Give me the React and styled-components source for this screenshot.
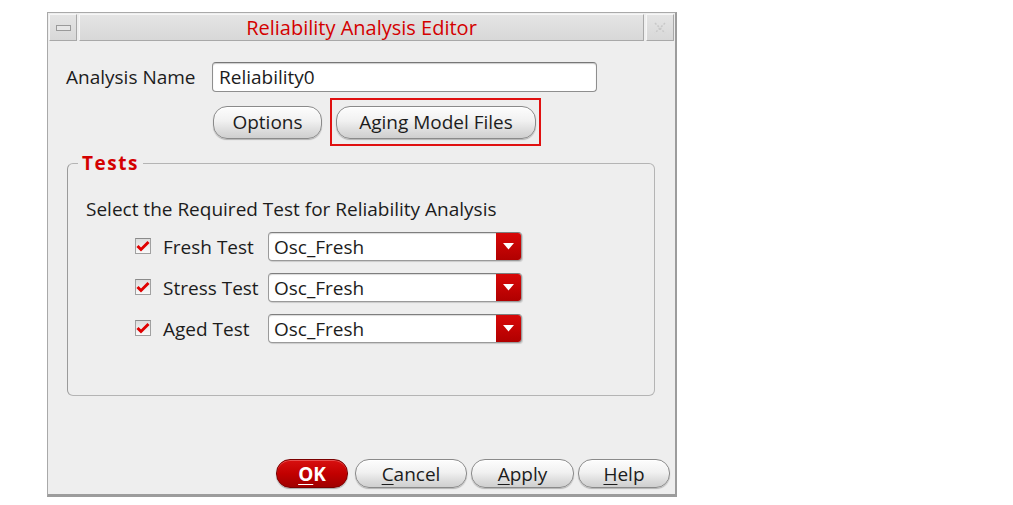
import styled, { createGlobalStyle } from "styled-components";

const GlobalStyle = createGlobalStyle`
  body {
    margin: 0;
    background: #ffffff;
    font-family: "Open Sans", "DejaVu Sans", sans-serif;
    color: #1c1c1c;
  }
`;

const Page = styled.div`
  padding: 12px 0 0 47px;
`;

const Window = styled.div`
  box-sizing: border-box;
  width: 630px;
  height: 485px;
  border: 1px solid #a9a9a9;
  border-right: 2px solid #9c9c9c;
  border-bottom: 3px solid #9c9c9c;
  background: #eeeeee;
  display: flex;
  flex-direction: column;
`;

const TitleBar = styled.div`
  display: flex;
  gap: 2px;
  height: 27px;
  padding: 1px 1px 0 1px;
`;

const TitleBox = styled.div`
  flex: ${props => props.grow ? 1 : "none"};
  width: ${props => props.grow ? "auto" : "26px"};
  display: flex;
  align-items: center;
  justify-content: center;
  background: linear-gradient(#e4e4e4, #d8d8d8);
  border-top: 1px solid #f6f6f6;
  border-left: 1px solid #f6f6f6;
  border-right: 1px solid #a8a8a8;
  border-bottom: 1px solid #a8a8a8;
  color: #d40000;
  font-size: 20px;
  line-height: 24px;
`;

const MinGlyph = styled.span`
  width: 13px;
  height: 4px;
  border: 1px solid #9a9a9a;
  background: #e6e6e6;
`;

const Content = styled.div`
  flex: 1;
  display: flex;
  flex-direction: column;
`;

const NameRow = styled.div`
  display: flex;
  align-items: center;
  margin-top: 21px;
  padding-left: 18px;
`;

const Label = styled.span`
  width: ${props => props.width || "auto"};
  font-size: 19px;
  line-height: 24px;
  white-space: nowrap;
`;

const TextInput = styled.div`
  box-sizing: border-box;
  width: 385px;
  height: 30px;
  display: flex;
  align-items: center;
  padding-left: 6px;
  background: #ffffff;
  border: 1px solid #8e8e8e;
  border-top-color: #777;
  border-radius: 4px;
  box-shadow: inset 0 1px 1px rgba(0, 0, 0, 0.2);
  font-size: 19px;
`;

const ButtonRow = styled.div`
  display: flex;
  align-items: center;
  gap: 8px;
  margin-top: 6px;
  padding-left: 165px;
`;

const Button = styled.button`
  box-sizing: border-box;
  width: ${props => props.w}px;
  height: ${props => props.h || 29}px;
  padding: 0;
  font-family: inherit;
  font-size: 19px;
  line-height: 24px;
  color: #1c1c1c;
  border: 1px solid #8a8a8a;
  border-radius: 14px;
  background: linear-gradient(#fdfdfd 0%, #f1f1f1 45%, #dadada 80%, #cfcfcf 100%);
  box-shadow: 0 1px 1px rgba(0, 0, 0, 0.25), inset 0 1px 0 #fff;
  u { text-decoration-thickness: 1px; text-underline-offset: 3px; }
`;

const PrimaryButton = styled(Button)`
  color: #ffffff;
  font-weight: 700;
  border-color: #7a0000;
  background: linear-gradient(#d81010 0%, #c20000 50%, #a00000 100%);
  box-shadow: 0 1px 1px rgba(0, 0, 0, 0.3), inset 0 1px 0 #e85050;
`;

const Highlight = styled.div`
  box-sizing: border-box;
  width: 211px;
  height: 48px;
  border: 2px solid #e01010;
  display: flex;
  align-items: center;
  padding-left: 4px;
`;

const Group = styled.fieldset`
  box-sizing: border-box;
  width: 588px;
  height: 244px;
  margin: 6px 0 0 19px;
  padding: 0;
  min-width: 0;
  border: 1px solid #b4b4b4;
  border-left-color: #9a9a9a;
  border-radius: 6px;
`;

const Legend = styled.legend`
  margin-left: 10px;
  padding: 0 4px;
  font-size: 19px;
  line-height: 22px;
  font-weight: 700;
  color: #d40000;
  letter-spacing: 1.5px;
`;

const Intro = styled.div`
  margin: 24px 0 0 18px;
  font-size: 19px;
  line-height: 22px;
`;

const TestList = styled.div`
  display: flex;
  flex-direction: column;
  gap: 12px;
  margin: 12px 0 0 67px;
`;

const TestRow = styled.div`
  display: grid;
  grid-template-columns: 16px 93px 254px;
  column-gap: 12px;
  align-items: center;
`;

const Check = styled.span`
  box-sizing: border-box;
  width: 16px;
  height: 16px;
  border: 1px solid #a0a0a0;
  border-top-color: #8a8a8a;
  background: linear-gradient(#dcdcdc, #fafafa);
  display: flex;
  align-items: center;
  justify-content: center;
  margin-top: -2px;
`;

const Combo = styled.div`
  box-sizing: border-box;
  height: 29px;
  display: flex;
  background: #ffffff;
  border: 1px solid #9a9a9a;
  border-top-color: #7e7e7e;
  border-radius: 4px;
  box-shadow: inset 0 1px 1px rgba(0, 0, 0, 0.15), 1px 1px 1px rgba(0, 0, 0, 0.15);
  overflow: hidden;
`;

const ComboText = styled.span`
  flex: 1;
  display: flex;
  align-items: center;
  padding-left: 5px;
  font-size: 19px;
`;

const ComboArrow = styled.span`
  width: 25px;
  display: flex;
  align-items: center;
  justify-content: center;
  background: linear-gradient(#d80808, #b00000);
`;

const Footer = styled.div`
  margin-top: auto;
  display: flex;
  justify-content: flex-end;
  gap: 4px;
  padding: 0 5px 6px 0;
`;

const CheckMark = () => (
  <svg width="14" height="12" viewBox="0 0 14 12">
    <path d="M1.5 6 L5 9.5 L12.5 2" fill="none" stroke="#e00000" strokeWidth="3" strokeLinejoin="miter" />
  </svg>
);

const Arrow = () => (
  <svg width="11" height="7" viewBox="0 0 11 7">
    <path d="M0 0 H11 L5.5 6.5 Z" fill="#ffffff" />
  </svg>
);

const CloseGlyph = () => (
  <svg width="14" height="14" viewBox="0 0 14 14">
    <path d="M2 2 L12 12 M12 2 L2 12" stroke="#c8c8c8" strokeWidth="1.5" strokeDasharray="2 1.5" fill="none" />
  </svg>
);

const tests = ["Fresh Test", "Stress Test", "Aged Test"];

const App = () => {
  return (
    <Page>
      <GlobalStyle />
      <Window>
        <TitleBar>
          <TitleBox><MinGlyph /></TitleBox>
          <TitleBox grow>Reliability Analysis Editor</TitleBox>
          <TitleBox><CloseGlyph /></TitleBox>
        </TitleBar>
        <Content>
          <NameRow>
            <Label width="146px">Analysis Name</Label>
            <TextInput>Reliability0</TextInput>
          </NameRow>
          <ButtonRow>
            <Button w={109} h={33}>Options</Button>
            <Highlight>
              <Button w={200} h={33}>Aging Model Files</Button>
            </Highlight>
          </ButtonRow>
          <Group>
            <Legend>Tests</Legend>
            <Intro>Select the Required Test for Reliability Analysis</Intro>
            <TestList>
              {tests.map(t => (
                <TestRow key={t}>
                  <Check><CheckMark /></Check>
                  <Label>{t}</Label>
                  <Combo>
                    <ComboText>Osc_Fresh</ComboText>
                    <ComboArrow><Arrow /></ComboArrow>
                  </Combo>
                </TestRow>
              ))}
            </TestList>
          </Group>
          <Footer>
            <PrimaryButton w={72} style={{ marginRight: 3 }}><u>O</u>K</PrimaryButton>
            <Button w={112}><u>C</u>ancel</Button>
            <Button w={103}><u>A</u>pply</Button>
            <Button w={92}><u>H</u>elp</Button>
          </Footer>
        </Content>
      </Window>
    </Page>
  );
};

export default App;
